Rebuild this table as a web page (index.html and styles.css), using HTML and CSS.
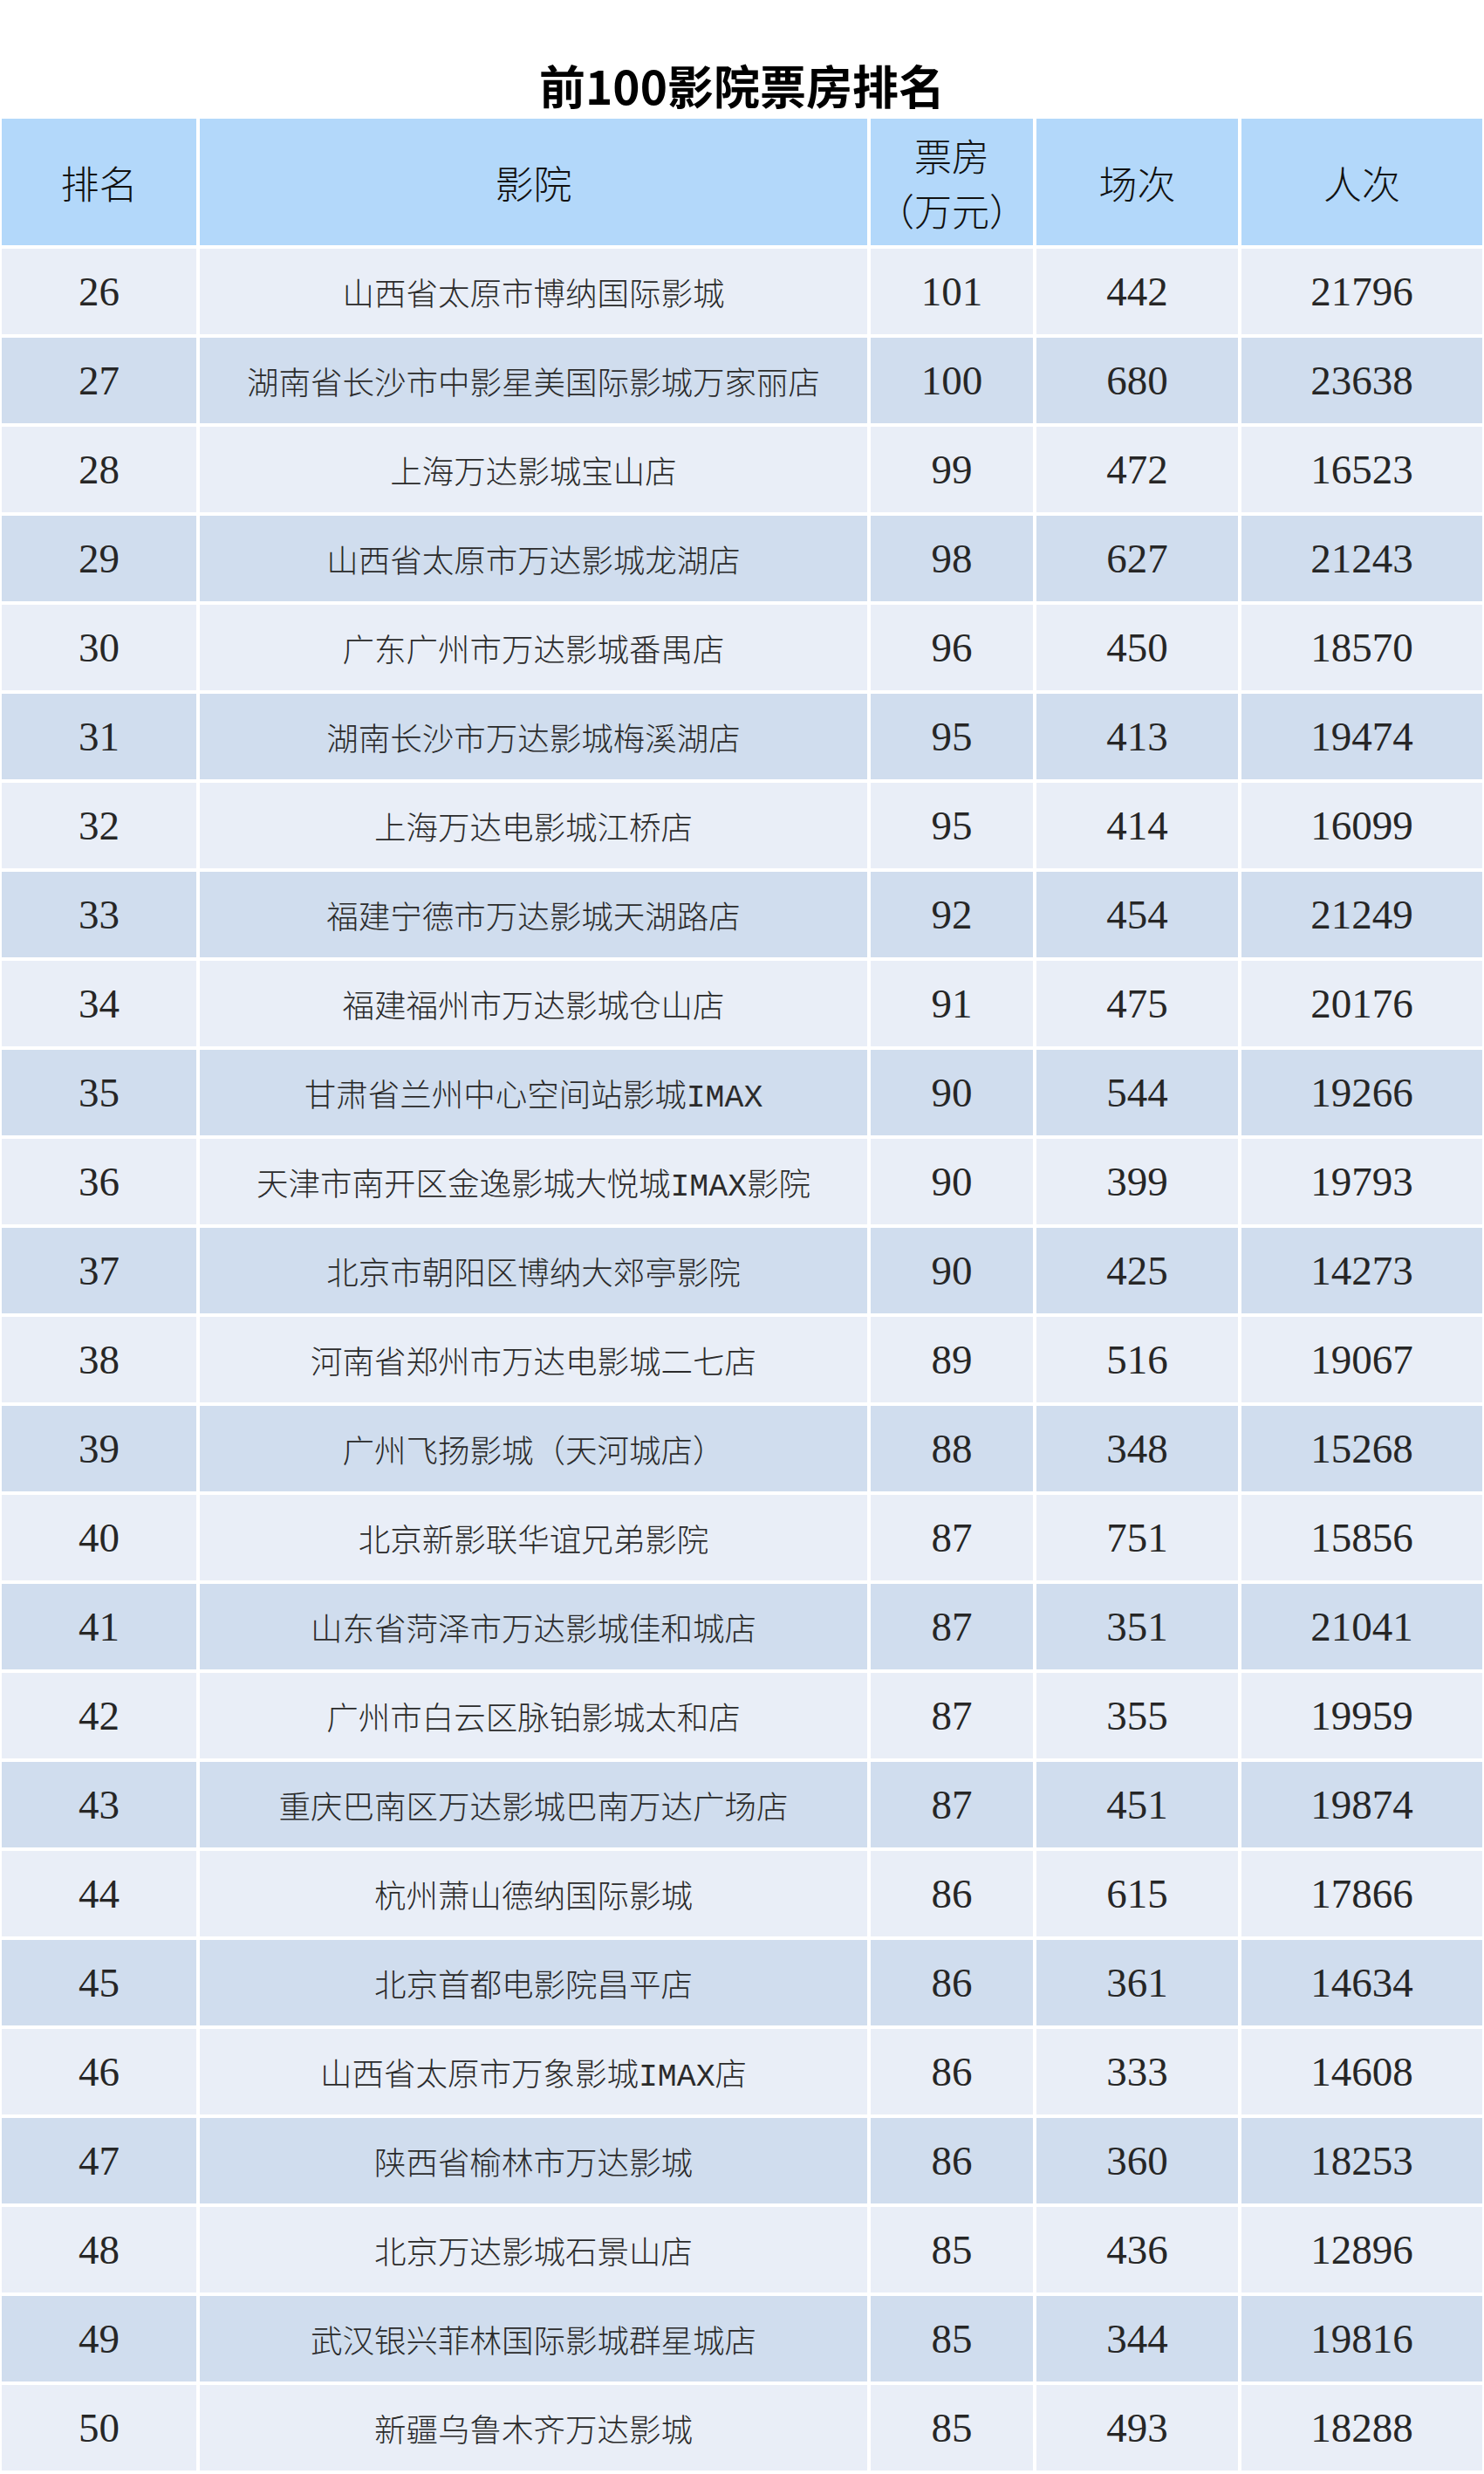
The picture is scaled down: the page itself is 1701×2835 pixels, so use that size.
FILE: index.html
```html
<!DOCTYPE html>
<html lang="zh-CN">
<head>
<meta charset="utf-8">
<title>前100影院票房排名</title>
<link rel="stylesheet" href="styles.css">
</head>
<body>
<h1 class="title">前100影院票房排名</h1>
<div class="table">
  <div class="row head">
    <div class="cell">排名</div>
    <div class="cell">影院</div>
    <div class="cell two">票房<br>（万元）</div>
    <div class="cell">场次</div>
    <div class="cell">人次</div>
  </div>
  <div class="row odd"><div class="cell num">26</div><div class="cell name">山西省太原市博纳国际影城</div><div class="cell num">101</div><div class="cell num">442</div><div class="cell num">21796</div></div>
  <div class="row even"><div class="cell num">27</div><div class="cell name">湖南省长沙市中影星美国际影城万家丽店</div><div class="cell num">100</div><div class="cell num">680</div><div class="cell num">23638</div></div>
  <div class="row odd"><div class="cell num">28</div><div class="cell name">上海万达影城宝山店</div><div class="cell num">99</div><div class="cell num">472</div><div class="cell num">16523</div></div>
  <div class="row even"><div class="cell num">29</div><div class="cell name">山西省太原市万达影城龙湖店</div><div class="cell num">98</div><div class="cell num">627</div><div class="cell num">21243</div></div>
  <div class="row odd"><div class="cell num">30</div><div class="cell name">广东广州市万达影城番禺店</div><div class="cell num">96</div><div class="cell num">450</div><div class="cell num">18570</div></div>
  <div class="row even"><div class="cell num">31</div><div class="cell name">湖南长沙市万达影城梅溪湖店</div><div class="cell num">95</div><div class="cell num">413</div><div class="cell num">19474</div></div>
  <div class="row odd"><div class="cell num">32</div><div class="cell name">上海万达电影城江桥店</div><div class="cell num">95</div><div class="cell num">414</div><div class="cell num">16099</div></div>
  <div class="row even"><div class="cell num">33</div><div class="cell name">福建宁德市万达影城天湖路店</div><div class="cell num">92</div><div class="cell num">454</div><div class="cell num">21249</div></div>
  <div class="row odd"><div class="cell num">34</div><div class="cell name">福建福州市万达影城仓山店</div><div class="cell num">91</div><div class="cell num">475</div><div class="cell num">20176</div></div>
  <div class="row even"><div class="cell num">35</div><div class="cell name">甘肃省兰州中心空间站影城IMAX</div><div class="cell num">90</div><div class="cell num">544</div><div class="cell num">19266</div></div>
  <div class="row odd"><div class="cell num">36</div><div class="cell name">天津市南开区金逸影城大悦城IMAX影院</div><div class="cell num">90</div><div class="cell num">399</div><div class="cell num">19793</div></div>
  <div class="row even"><div class="cell num">37</div><div class="cell name">北京市朝阳区博纳大郊亭影院</div><div class="cell num">90</div><div class="cell num">425</div><div class="cell num">14273</div></div>
  <div class="row odd"><div class="cell num">38</div><div class="cell name">河南省郑州市万达电影城二七店</div><div class="cell num">89</div><div class="cell num">516</div><div class="cell num">19067</div></div>
  <div class="row even"><div class="cell num">39</div><div class="cell name">广州飞扬影城（天河城店）</div><div class="cell num">88</div><div class="cell num">348</div><div class="cell num">15268</div></div>
  <div class="row odd"><div class="cell num">40</div><div class="cell name">北京新影联华谊兄弟影院</div><div class="cell num">87</div><div class="cell num">751</div><div class="cell num">15856</div></div>
  <div class="row even"><div class="cell num">41</div><div class="cell name">山东省菏泽市万达影城佳和城店</div><div class="cell num">87</div><div class="cell num">351</div><div class="cell num">21041</div></div>
  <div class="row odd"><div class="cell num">42</div><div class="cell name">广州市白云区脉铂影城太和店</div><div class="cell num">87</div><div class="cell num">355</div><div class="cell num">19959</div></div>
  <div class="row even"><div class="cell num">43</div><div class="cell name">重庆巴南区万达影城巴南万达广场店</div><div class="cell num">87</div><div class="cell num">451</div><div class="cell num">19874</div></div>
  <div class="row odd"><div class="cell num">44</div><div class="cell name">杭州萧山德纳国际影城</div><div class="cell num">86</div><div class="cell num">615</div><div class="cell num">17866</div></div>
  <div class="row even"><div class="cell num">45</div><div class="cell name">北京首都电影院昌平店</div><div class="cell num">86</div><div class="cell num">361</div><div class="cell num">14634</div></div>
  <div class="row odd"><div class="cell num">46</div><div class="cell name">山西省太原市万象影城IMAX店</div><div class="cell num">86</div><div class="cell num">333</div><div class="cell num">14608</div></div>
  <div class="row even"><div class="cell num">47</div><div class="cell name">陕西省榆林市万达影城</div><div class="cell num">86</div><div class="cell num">360</div><div class="cell num">18253</div></div>
  <div class="row odd"><div class="cell num">48</div><div class="cell name">北京万达影城石景山店</div><div class="cell num">85</div><div class="cell num">436</div><div class="cell num">12896</div></div>
  <div class="row even"><div class="cell num">49</div><div class="cell name">武汉银兴菲林国际影城群星城店</div><div class="cell num">85</div><div class="cell num">344</div><div class="cell num">19816</div></div>
  <div class="row odd"><div class="cell num">50</div><div class="cell name">新疆乌鲁木齐万达影城</div><div class="cell num">85</div><div class="cell num">493</div><div class="cell num">18288</div></div>
</div>
</body>
</html>
```
FILE: styles.css
```css
html, body {
  margin: 0;
  padding: 0;
  background: #ffffff;
}

body {
  font-family: "Noto Sans CJK SC", "Noto Sans", sans-serif;
}

.title {
  margin: 0;
  padding-top: 64px;
  height: 66px;
  padding-bottom: 6px;
  font-size: 53px;
  line-height: 66px;
  font-weight: 700;
  text-align: center;
  color: #000000;
}

.table {
  display: grid;
  grid-template-columns: 223px 765px 186px 231px 276px;
  grid-template-rows: 145px;
  grid-auto-rows: 98px;
  gap: 4px;
  padding-left: 2px;
}

.row {
  display: contents;
}

.cell {
  display: flex;
  align-items: center;
  justify-content: center;
  text-align: center;
  color: #2a2a2a;
}

.head .cell {
  background: #b3d8fa;
  color: #111111;
  font-size: 44px;
  line-height: 64px;
  font-weight: 300;
}

.head .two {
  font-size: 43px;
  line-height: 63px;
}

.odd .cell {
  background: #e9eef7;
}

.even .cell {
  background: #d0ddee;
}

.num {
  font-family: "Liberation Serif", "Noto Sans CJK SC", serif;
  font-size: 47px;
  color: #262626;
}

.name {
  font-family: "Liberation Mono", "Noto Sans CJK SC", monospace;
  font-size: 36.5px;
  font-weight: 300;
  color: #2b2b2b;
}
```
